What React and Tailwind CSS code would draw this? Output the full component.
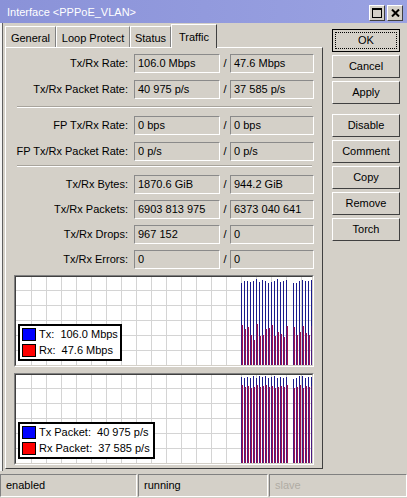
const TABS = [
  ['General', 'w-[51px]'],
  ['Loop Protect', 'w-[74px]'],
  ['Status', 'w-[41px]'],
  ['Traffic', 'w-[46px]'],
]

const ACTIONS = [['OK', 'Cancel', 'Apply'], ['Disable', 'Comment', 'Copy', 'Remove', 'Torch']]

const RATE_ROWS = [
  ['Tx/Rx Rate:', '106.0 Mbps', '47.6 Mbps'],
  ['Tx/Rx Packet Rate:', '40 975 p/s', '37 585 p/s'],
]

const FP_ROWS = [
  ['FP Tx/Rx Rate:', '0 bps', '0 bps'],
  ['FP Tx/Rx Packet Rate:', '0 p/s', '0 p/s'],
]

const COUNTER_ROWS = [
  ['Tx/Rx Bytes:', '1870.6 GiB', '944.2 GiB'],
  ['Tx/Rx Packets:', '6903 813 975', '6373 040 641'],
  ['Tx/Rx Drops:', '967 152', '0'],
  ['Tx/Rx Errors:', '0', '0'],
]

// samples as [txTop, rxTop] in px from the top of the plot area
const BYTE_SAMPLES = [
  [6, 48], [4, 52], [4, 50], [5, 58], [4, 63], [2, 47], [5, 59], [3, 58],
  [4, 52], [6, 51], [5, 48], [4, 59], [2, 55], [5, 57], [4, 60], [3, 49],
]
const BYTE_SAMPLES_2 = [[6, 50], [6, 58], [4, 55], [3, 49], [4, 56], [4, 58], [3, 49]]

const PACKET_SAMPLES = [
  [2, 10], [3, 12], [2, 11], [3, 13], [1, 12], [3, 10], [1, 12], [2, 11],
  [1, 10], [3, 12], [2, 11], [1, 13], [3, 12], [2, 11], [3, 12], [2, 10],
]
const PACKET_SAMPLES_2 = [[4, 13], [3, 12], [1, 10], [1, 13], [3, 11], [2, 12], [2, 11]]

function Field({ value }) {
  return (
    <div className="flex h-[19px] items-center border border-[#8a8a8a] border-b-white border-r-white px-[3px]">
      {value}
    </div>
  )
}

function FieldRow({ label, left, right, height }) {
  return (
    <div className={`flex items-center ${height}`}>
      <div className="w-[121px] whitespace-nowrap text-right">{label}</div>
      <div className="ml-[6px] w-[86px]">
        <Field value={left} />
      </div>
      <div className="w-[10px] text-center">/</div>
      <div className="w-[84px]">
        <Field value={right} />
      </div>
    </div>
  )
}

function Separator({ className }) {
  return <div className={`mx-[10px] h-[2px] border-t border-[#a8a49c] border-b border-b-white ${className}`} />
}

function Plot({ samples, second }) {
  const vlines = []
  for (let x = 15; x < 296; x += 15) vlines.push(x)
  const hlines = [13, 28, 43, 58, 73]
  const bars = [
    ...samples.map((s, i) => [225 + i * 3, s]),
    ...second.map((s, i) => [277 + i * 3, s]),
  ]

  return (
    <svg width="296" height="88" className="block">
      <rect width="296" height="88" fill="#ffffff" />
      {vlines.map((x) => (
        <line key={`v${x}`} x1={x + 0.5} x2={x + 0.5} y1="0" y2="88" stroke="#d4d4d4" />
      ))}
      {hlines.map((y) => (
        <line key={`h${y}`} x1="0" x2="296" y1={y + 0.5} y2={y + 0.5} stroke="#d4d4d4" />
      ))}
      {bars.map(([x, [tx, rx]]) => (
        <g key={x}>
          <rect x={x} y={tx} width="1" height={88 - tx} fill="#1a1a8c" />
          <rect x={x + 1} y={rx} width="1" height={88 - rx} fill="#a0104c" />
          <rect x={x} y={rx} width="1" height={88 - rx} fill="#4a1a80" />
        </g>
      ))}
    </svg>
  )
}

function Legend({ items, width }) {
  return (
    <div className={`absolute left-[2px] top-[47px] flex flex-col gap-[3px] border-2 border-black bg-white px-[2px] py-[2px] ${width}`}>
      {items.map(([color, text]) => (
        <div key={text} className="flex h-[13px] items-center gap-[3px] whitespace-pre">
          <span className={`inline-block h-[13px] w-[14px] shrink-0 border border-black ${color}`} />
          {text}
        </div>
      ))}
    </div>
  )
}

function Graph({ samples, second, legend, legendWidth, className }) {
  return (
    <div className={`w-[300px] border border-[#808080] border-b-white border-r-white ${className}`}>
      <div className="relative border border-[#404040] border-b-[#d4d0c8] border-r-[#d4d0c8]">
        <Plot samples={samples} second={second} />
        <Legend items={legend} width={legendWidth} />
      </div>
    </div>
  )
}

function ActionButton({ label, primary }) {
  return (
    <div
      className={`flex h-[23px] w-[68px] items-center justify-center border ${
        primary ? 'border-black p-[2px]' : 'border-white border-b-[#404040] border-r-[#404040]'
      }`}
    >
      {primary ? (
        <div className="flex h-full w-full items-center justify-center border border-dotted border-black">{label}</div>
      ) : (
        label
      )}
    </div>
  )
}

function StatusCell({ children, className }) {
  return (
    <div className={`flex h-[23px] items-center border border-[#808080] border-b-white border-r-white px-[5px] ${className}`}>
      {children}
    </div>
  )
}

export default function App() {
  return (
    <div
      className="flex h-[498px] w-[407px] flex-col overflow-hidden bg-[#d4d0c8] text-[11px] text-black"
      style={{ fontFamily: '"Liberation Sans", Arial, sans-serif' }}
    >
      {/* title bar */}
      <div className="flex h-[23px] items-center bg-gradient-to-r from-[#8a92d8] to-[#9aa2e2] pl-[7px] pr-[4px] pt-[2px] text-white">
        <span>Interface &lt;PPPoE_VLAN&gt;</span>
        <div className="ml-auto flex gap-[2px]">
          <div className="flex h-[16px] w-[16px] items-center justify-center border border-white border-b-[#404040] border-r-[#404040] bg-[#d4d0c8]">
            <div className="h-[10px] w-[10px] border border-black border-t-2" />
          </div>
          <div className="flex h-[16px] w-[16px] items-center justify-center border border-white border-b-[#404040] border-r-[#404040] bg-[#d4d0c8]">
            <svg width="9" height="8" viewBox="0 0 9 8">
              <path d="M1 0.5 L8 7.5 M8 0.5 L1 7.5" stroke="#000" strokeWidth="2" />
            </svg>
          </div>
        </div>
      </div>

      <div className="flex flex-1">
        <div className="w-[3px] border-r border-[#606060] bg-[#f4f4f4]" />

        <div className="ml-[2px] flex w-[318px] flex-col">
          {/* tabs */}
          <div className="flex h-[24px] items-end">
            {TABS.map(([tab, width]) =>
              tab === 'Traffic' ? (
                <div
                  key={tab}
                  className={`relative -mb-px flex h-[24px] items-start justify-center border border-b-0 border-white border-r-[#404040] bg-[#d4d0c8] pt-[4px] ${width}`}
                >
                  {tab}
                </div>
              ) : (
                <div
                  key={tab}
                  className={`flex h-[21px] items-center justify-center border border-b-0 border-white border-r-[#808080] pt-[2px] ${width}`}
                >
                  {tab}
                </div>
              )
            )}
          </div>

          {/* traffic panel */}
          <div className="flex h-[422px] flex-col border border-white border-b-[#404040] border-r-[#404040] pl-[1px] pt-[2px]">
            {RATE_ROWS.map(([label, a, b]) => (
              <FieldRow key={label} label={label} left={a} right={b} height="h-[26px]" />
            ))}
            <Separator className="mt-[4px]" />
            <div className="mt-[4px]">
              {FP_ROWS.map(([label, a, b]) => (
                <FieldRow key={label} label={label} left={a} right={b} height="h-[26px]" />
              ))}
            </div>
            <Separator className="mt-[1px]" />
            <div className="mt-[5px]">
              {COUNTER_ROWS.map(([label, a, b]) => (
                <FieldRow key={label} label={label} left={a} right={b} height="h-[25px]" />
              ))}
            </div>

            <Graph
              className="ml-[7px] mt-[3px]"
              samples={BYTE_SAMPLES}
              second={BYTE_SAMPLES_2}
              legendWidth="w-[104px]"
              legend={[
                ['bg-[#0000ff]', 'Tx:  106.0 Mbps'],
                ['bg-[#ff0000]', 'Rx:  47.6 Mbps'],
              ]}
            />
            <Graph
              className="ml-[7px] mt-[6px]"
              samples={PACKET_SAMPLES}
              second={PACKET_SAMPLES_2}
              legendWidth="w-[137px]"
              legend={[
                ['bg-[#0000ff]', 'Tx Packet:  40 975 p/s'],
                ['bg-[#ff0000]', 'Rx Packet:  37 585 p/s'],
              ]}
            />
          </div>
        </div>

        {/* action buttons */}
        <div className="ml-[9px] flex flex-col pt-[6px]">
          {ACTIONS.map((group, gi) => (
            <div key={gi} className={`flex flex-col gap-[3px] ${gi ? 'mt-[10px]' : ''}`}>
              {group.map((label) => (
                <ActionButton key={label} label={label} primary={label === 'OK'} />
              ))}
            </div>
          ))}
        </div>
      </div>

      {/* status bar */}
      <div className="flex h-[27px] items-center gap-[1px] pb-[1px] pt-[2px]">
        <StatusCell className="w-[137px]">enabled</StatusCell>
        <StatusCell className="w-[130px]">running</StatusCell>
        <StatusCell className="flex-1 text-[#b0aca4]">slave</StatusCell>
      </div>
    </div>
  )
}
